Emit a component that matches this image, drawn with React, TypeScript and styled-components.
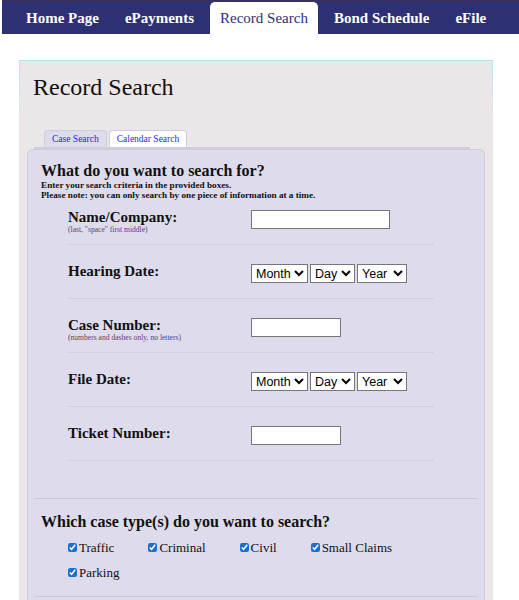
import React from "react";
import styled, { createGlobalStyle } from "styled-components";

const GlobalStyle = createGlobalStyle`
  body {
    margin: 0;
    background: #ffffff;
    font-family: "Liberation Serif", "Times New Roman", serif;
    color: #111111;
  }
`;

const navItems = ["Home Page", "ePayments", "Record Search", "Bond Schedule", "eFile"];

const months = ["Month", "Jan", "Feb", "Mar", "Apr", "May", "Jun", "Jul", "Aug", "Sep", "Oct", "Nov", "Dec"];
const days = ["Day", ...Array.from({ length: 31 }, (_, i) => String(i + 1))];
const years = ["Year", ...Array.from({ length: 30 }, (_, i) => String(2025 - i))];

const caseTypes = ["Traffic", "Criminal", "Civil", "Small Claims", "Parking"];

const DateSelects: React.FunctionComponent = () => (
  <SelectGroup>
    <DateSelect defaultValue="Month">
      {months.map((m) => (
        <option key={m}>{m}</option>
      ))}
    </DateSelect>
    <DateSelect defaultValue="Day">
      {days.map((d) => (
        <option key={d}>{d}</option>
      ))}
    </DateSelect>
    <DateSelect defaultValue="Year">
      {years.map((y) => (
        <option key={y}>{y}</option>
      ))}
    </DateSelect>
  </SelectGroup>
);

export default function App() {
  return (
    <>
      <GlobalStyle />
      <Nav>
        {navItems.map((item) => (
          <NavItem key={item} $active={item === "Record Search"}>
            {item}
          </NavItem>
        ))}
      </Nav>
      <Container>
        <PageTitle>Record Search</PageTitle>
        <TabBar>
          <Tab $selected>Case Search</Tab>
          <Tab>Calendar Search</Tab>
        </TabBar>
        <Panel>
          <Section>
            <SectionTitle>What do you want to search for?</SectionTitle>
            <Hint>Enter your search criteria in the provided boxes.</Hint>
            <Hint>Please note: you can only search by one piece of information at a time.</Hint>
            <Rows>
              <Row>
                <LabelBlock>
                  <FieldLabel>Name/Company:</FieldLabel>
                  <Note>
                    (last, "space" <NoteAccent>first middle</NoteAccent>)
                  </Note>
                </LabelBlock>
                <TextInput $width={139} />
              </Row>
              <Row>
                <LabelBlock>
                  <FieldLabel>Hearing Date:</FieldLabel>
                </LabelBlock>
                <DateSelects />
              </Row>
              <Row>
                <LabelBlock>
                  <FieldLabel>Case Number:</FieldLabel>
                  <Note>
                    (numbers and dashes only, <NoteAccent>no letters</NoteAccent>)
                  </Note>
                </LabelBlock>
                <TextInput $width={90} />
              </Row>
              <Row>
                <LabelBlock>
                  <FieldLabel>File Date:</FieldLabel>
                </LabelBlock>
                <DateSelects />
              </Row>
              <Row>
                <LabelBlock>
                  <FieldLabel>Ticket Number:</FieldLabel>
                </LabelBlock>
                <TextInput $width={90} />
              </Row>
            </Rows>
          </Section>
          <Section $divided>
            <SectionTitle>Which case type(s) do you want to search?</SectionTitle>
            <CheckList>
              {caseTypes.map((t) => (
                <CheckItem key={t}>
                  <CheckBox type="checkbox" defaultChecked />
                  {t}
                </CheckItem>
              ))}
            </CheckList>
          </Section>
          <Section $divided />
        </Panel>
      </Container>
    </>
  );
}

const Nav = styled.nav`
  display: flex;
  height: 32px;
  margin-left: 2px;
  padding: 2px 0 0 11px;
  background: #2e3075;
  box-shadow: inset 0 2px 0 #3a2f62;
`;

const NavItem = styled.div<{ $active?: boolean }>`
  margin: 0 3px;
  padding: 0 10px;
  line-height: 32px;
  font-size: 15px;
  font-weight: ${(p) => (p.$active ? "normal" : "bold")};
  color: ${(p) => (p.$active ? "#2e3075" : "#ffffff")};
  background: ${(p) => (p.$active ? "#ffffff" : "transparent")};
  border-radius: 5px 5px 0 0;
  white-space: nowrap;
`;

const Container = styled.main`
  width: 474px;
  box-sizing: border-box;
  margin: 26px 0 0 19px;
  padding: 12px 0 0;
  background: #ebe6e7;
  border: 1px solid;
  border-bottom: 0;
  border-image: linear-gradient(to bottom, #b4e4f5, #ebe6e7 60px) 1;
`;

const PageTitle = styled.h1`
  margin: 0 0 29px 13px;
  font-size: 24px;
  line-height: 28px;
  font-weight: normal;
  color: #111111;
`;

const TabBar = styled.div`
  display: flex;
  gap: 2px;
  margin: 0 22px 0 14px;
  padding-left: 10px;
  border-bottom: 2px solid #cfcddc;
`;

const Tab = styled.div<{ $selected?: boolean }>`
  height: 16px;
  padding: 0 7px;
  line-height: 17px;
  font-size: 9.5px;
  color: #1f1fe8;
  background: ${(p) => (p.$selected ? "#dddbec" : "#ffffff")};
  border: 1px solid #cfcddc;
  border-bottom: 0;
  border-radius: 4px 4px 0 0;
`;

const Panel = styled.section`
  margin: 0 7px;
  padding: 0 7px;
  background: #dddbec;
  border: 1px solid #cfcddc;
  border-bottom: 0;
  border-radius: 6px 6px 0 0;
`;

const Section = styled.div<{ $divided?: boolean }>`
  padding: ${(p) => (p.$divided ? "14px 6px 11px" : "12px 6px 37px")};
  border-top: ${(p) => (p.$divided ? "1px solid #c8c6d9" : "0")};
`;

const SectionTitle = styled.h2`
  margin: 0;
  font-size: 16px;
  line-height: 18px;
  font-weight: bold;
  color: #111111;
`;

const Hint = styled.p`
  margin: 0;
  font-size: 9.2px;
  line-height: 10px;
  font-weight: bold;
  color: #111111;
`;

const Rows = styled.div`
  width: 365px;
  margin-left: 27px;
`;

const Row = styled.div`
  display: grid;
  grid-template-columns: 183px 1fr;
  align-items: start;
  height: 54px;
  box-sizing: border-box;
  padding-top: 19px;
  border-bottom: 1px dotted #c4c2d4;

  &:first-child {
    height: 45px;
    padding-top: 10px;
  }
`;

const LabelBlock = styled.div`
  display: flex;
  flex-direction: column;
`;

const FieldLabel = styled.span`
  font-size: 15px;
  line-height: 15px;
  font-weight: bold;
  color: #111111;
`;

const Note = styled.span`
  font-size: 7.6px;
  line-height: 9px;
  color: #6b4160;
`;

const NoteAccent = styled.span`
  color: #3d3fa8;
`;

const TextInput = styled.input<{ $width: number }>`
  width: ${(p) => p.$width}px;
  height: 19px;
  box-sizing: border-box;
  margin: 0;
  padding: 1px 3px;
  border: 1px solid #767676;
  background: #ffffff;
  font-family: "Liberation Sans", Arial, sans-serif;
  font-size: 13px;
`;

const SelectGroup = styled.div`
  display: flex;
  gap: 2px;
`;

const DateSelect = styled.select`
  height: 19px;
  box-sizing: border-box;
  margin: 0;
  padding: 0;
  border: 1px solid #767676;
  border-radius: 0;
  background: #ffffff;
  color: #000000;
  font-family: "Liberation Sans", Arial, sans-serif;
  font-size: 12.5px;
`;

const CheckList = styled.div`
  display: flex;
  flex-wrap: wrap;
  width: 365px;
  margin: 4px 0 0 27px;
`;

const CheckItem = styled.label`
  display: flex;
  align-items: center;
  height: 25px;
  margin-right: 34px;
  font-size: 13px;
  color: #111111;
`;

const CheckBox = styled.input`
  width: 9px;
  height: 9px;
  margin: 0 2px 0 0;
  accent-color: #1a6fd6;
`;
